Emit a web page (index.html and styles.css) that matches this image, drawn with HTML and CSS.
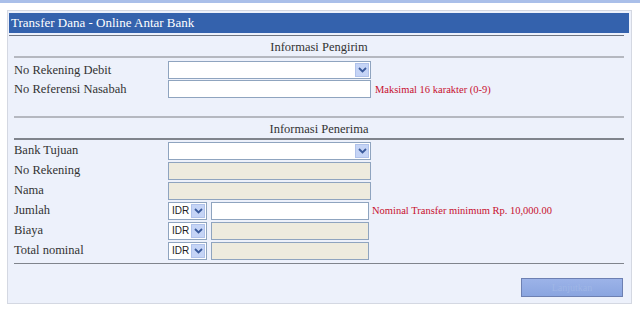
FILE: index.html
```html
<!DOCTYPE html>
<html>
<head>
<meta charset="utf-8">
<link rel="stylesheet" href="styles.css">
</head>
<body>
<div class="topband"></div>
<div class="panel">
  <div class="header">Transfer Dana - Online Antar Bank</div>
  <div class="hline"></div>
  <div class="section">
    <div class="stitle">Informasi Pengirim</div>
    <div class="rule light"></div>
    <div class="rows first">
      <div class="row">
        <span class="label">No Rekening Debit</span>
        <div class="sel wide"><span class="arrow"><svg width="9" height="6" viewBox="0 0 9 6"><path d="M1 1 L4.5 4.5 L8 1" fill="none" stroke="#3a5a9c" stroke-width="1.8"/></svg></span></div>
      </div>
      <div class="row">
        <span class="label">No Referensi Nasabah</span>
        <div class="inp wide white"></div>
        <span class="hint">Maksimal 16 karakter (0-9)</span>
      </div>
    </div>
  </div>
  <div class="section second">
    <div class="rule light"></div>
    <div class="stitle">Informasi Penerima</div>
    <div class="rule dark"></div>
    <div class="rows">
      <div class="row">
        <span class="label">Bank Tujuan</span>
        <div class="sel wide"><span class="arrow"><svg width="9" height="6" viewBox="0 0 9 6"><path d="M1 1 L4.5 4.5 L8 1" fill="none" stroke="#3a5a9c" stroke-width="1.8"/></svg></span></div>
      </div>
      <div class="row">
        <span class="label">No Rekening</span>
        <div class="inp wide beige"></div>
      </div>
      <div class="row">
        <span class="label">Nama</span>
        <div class="inp wide beige"></div>
      </div>
      <div class="row">
        <span class="label">Jumlah</span>
        <div class="sel cur"><span class="cv">IDR</span><span class="arrow"><svg width="9" height="6" viewBox="0 0 9 6"><path d="M1 1 L4.5 4.5 L8 1" fill="none" stroke="#3a5a9c" stroke-width="1.8"/></svg></span></div>
        <div class="inp amt white"></div>
        <span class="hint">Nominal Transfer minimum Rp. 10,000.00</span>
      </div>
      <div class="row">
        <span class="label">Biaya</span>
        <div class="sel cur"><span class="cv">IDR</span><span class="arrow"><svg width="9" height="6" viewBox="0 0 9 6"><path d="M1 1 L4.5 4.5 L8 1" fill="none" stroke="#3a5a9c" stroke-width="1.8"/></svg></span></div>
        <div class="inp amt beige"></div>
      </div>
      <div class="row">
        <span class="label">Total nominal</span>
        <div class="sel cur"><span class="cv">IDR</span><span class="arrow"><svg width="9" height="6" viewBox="0 0 9 6"><path d="M1 1 L4.5 4.5 L8 1" fill="none" stroke="#3a5a9c" stroke-width="1.8"/></svg></span></div>
        <div class="inp amt beige"></div>
      </div>
    </div>
    <div class="rule dark bottom"></div>
  </div>
  <div class="actions">
    <div class="btn">Lanjutkan</div>
  </div>
</div>
</body>
</html>
```
FILE: styles.css
```css
html, body {
  margin: 0;
  padding: 0;
  background: #ffffff;
  color: #2a2a2a;
}
body {
  font-family: "Liberation Serif", "Times New Roman", serif;
  font-size: 12px;
}
.topband {
  height: 3px;
  background: #aabfe9;
}
.panel {
  margin: 7px 0 0 7px;
  width: 625px;
  height: 294px;
  border: 1px solid #d4d8e2;
  background: #edf1fb;
  padding: 2px 2px 0 1px;
  box-sizing: border-box;
}
.header {
  height: 20px;
  background: #3462ad;
  color: #ffffff;
  font-size: 13px;
  line-height: 20px;
  padding-left: 2px;
}
.hline {
  height: 1px;
  background: #6e7480;
  margin: 2px 5px 0 0;
}
.section {
  padding: 0 5px 0 5px;
}
.stitle {
  text-align: center;
  font-size: 12.5px;
  line-height: 18px;
  padding-top: 2px;
  color: #333;
}
.rule {
  height: 2px;
}
.rule.light {
  background: #b5b8c0;
}
.rule.dark {
  background: #80848c;
  height: 1.5px;
}
.rows {
  display: flex;
  flex-direction: column;
  gap: 2px;
  padding-top: 3px;
}
.rows.first {
  gap: 1px;
}
.second {
  margin-top: 18px;
}
.second .rows {
  padding-top: 2px;
  gap: 2px;
}
.row {
  display: flex;
  align-items: center;
  height: 18px;
}
.label {
  width: 154px;
  font-size: 12.5px;
  color: #333;
}
.sel, .inp {
  height: 18px;
  box-sizing: border-box;
  border: 1px solid #8fa4bf;
  background: #ffffff;
}
.wide {
  width: 203px;
}
.sel {
  display: flex;
  align-items: center;
  justify-content: flex-end;
  padding-right: 1px;
}
.arrow {
  width: 14px;
  height: 14px;
  background: #c5d4f6;
  border: 1px solid #b0c2ea;
  box-sizing: border-box;
  display: flex;
  align-items: center;
  justify-content: center;
}
.cur {
  width: 39px;
  margin-right: 4px;
  justify-content: space-between;
}
.cv {
  font-family: "Liberation Sans", Arial, sans-serif;
  font-size: 10px;
  padding-left: 3px;
  color: #222;
}
.amt {
  width: 158px;
}
.white {
  background: #ffffff;
}
.beige {
  background: #eeebde;
}
.hint {
  color: #c8102e;
  font-size: 10.5px;
  margin-left: 4px;
}
.inp.amt + .hint {
  margin-left: 3px;
}
.bottom {
  margin-top: 3px;
}
.actions {
  display: flex;
  justify-content: flex-end;
  padding: 14px 6px 0 0;
}
.btn {
  width: 102px;
  height: 19px;
  box-sizing: border-box;
  border: 1px solid #6d80b2;
  background: linear-gradient(#9cb3e8, #8aa5e0);
  color: #9fb6e6;
  font-size: 10px;
  text-align: center;
  line-height: 17px;
}
```
